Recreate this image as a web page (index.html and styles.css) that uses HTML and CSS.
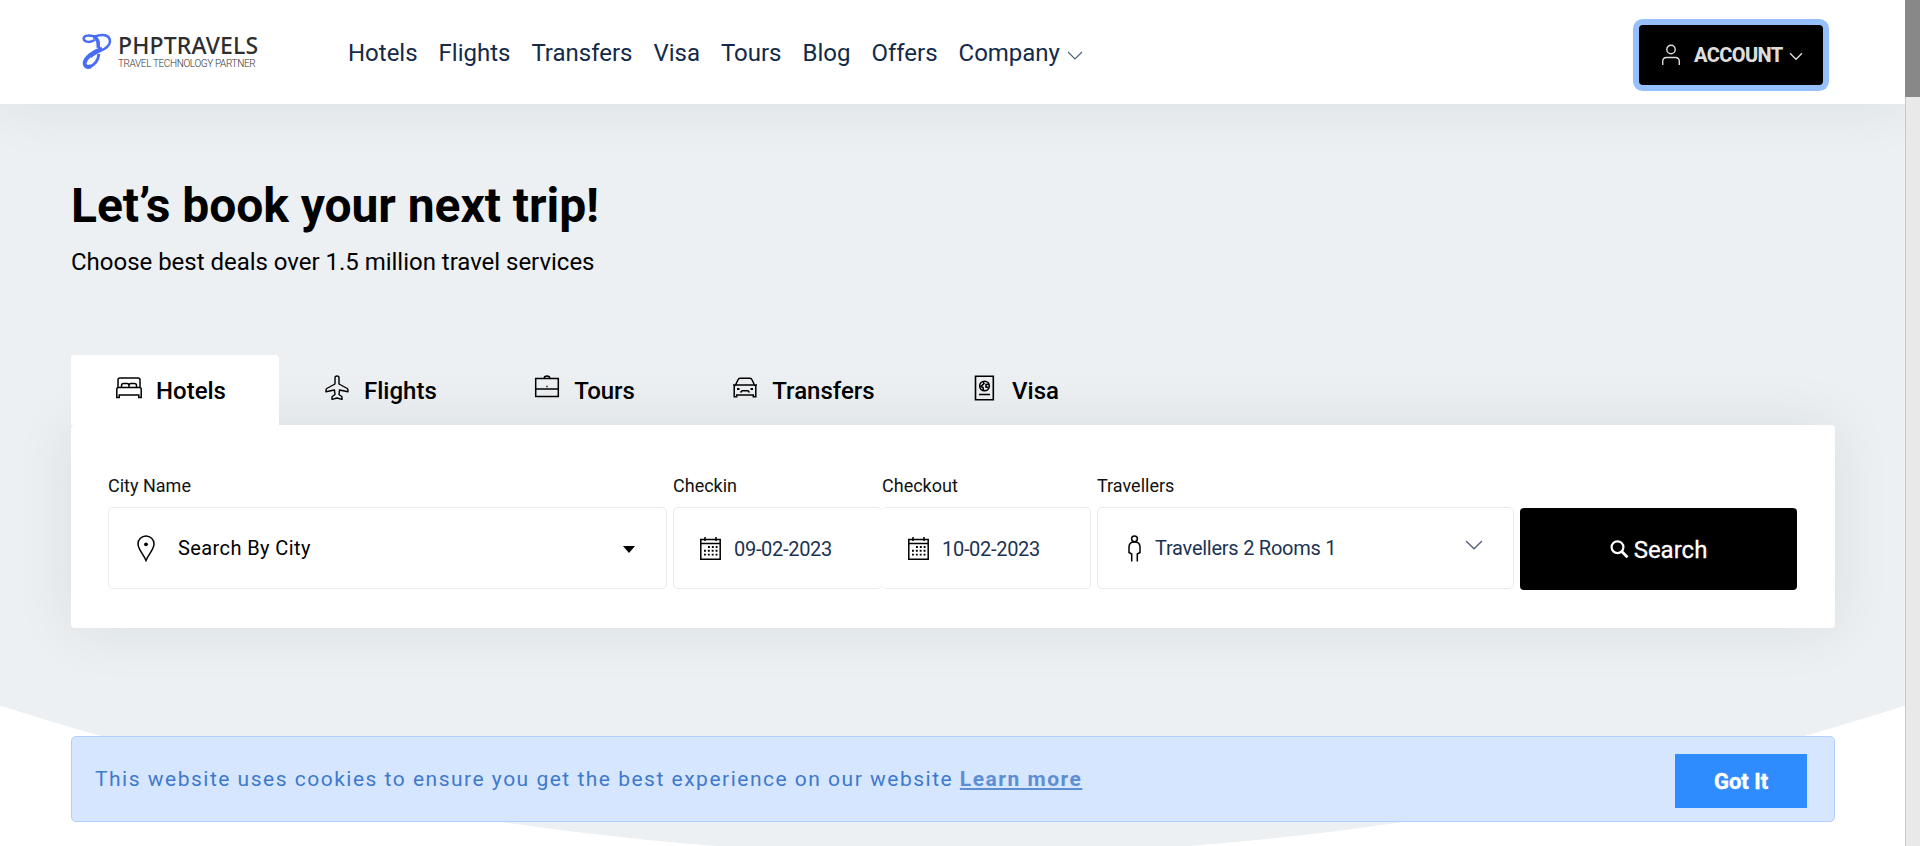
FILE: index.html
```
<!DOCTYPE html>
<html lang="en">
<head>
<meta charset="utf-8">
<title>PHPTRAVELS</title>
<link rel="stylesheet" href="styles.css">
</head>
<body>
<div class="page">
  <header class="header">
    <a class="logo">
      <svg class="logo-mark" width="31" height="37" viewBox="0 0 31 37" fill="none" stroke="#476cf5">
        <path d="M12.500 7C9 9.500 2 10 1.600 5.500C2 1.500 8 2.500 13 3.500C20 .8 27.800 1.200 28 8.500C27.500 16.500 15.500 17.500 8.500 24" stroke-width="2.500"/>
        <path d="M11.500 3.500C16 5.500 16.800 9.500 16.300 15" stroke-width="3.600"/>
        <path d="M20 15.500C12 18.500 2 25 2.800 31C3.500 34.800 7.500 34.500 9 32.500" stroke-width="4"/>
        <path d="M7 34C12.500 32 16.500 27 16.800 21" stroke-width="3"/>
      </svg>
      <span class="logo-text"><b class="logo-name">PHPTRAVELS</b><span class="logo-sub">TRAVEL TECHNOLOGY PARTNER</span></span>
    </a>
    <nav class="nav">
      <a>Hotels</a><a>Flights</a><a>Transfers</a><a>Visa</a><a>Tours</a><a>Blog</a><a>Offers</a><a>Company</a>
      <svg class="nav-chevron" width="16" height="10" viewBox="0 0 16 10" fill="none" stroke="#52617a" stroke-width="1.200"><path d="M1 1l7 7 7-7"/></svg>
    </nav>
    <button class="account">
      <svg width="20" height="22" viewBox="0 0 20 22" fill="none" stroke="#ddd" stroke-width="1.400"><circle cx="10" cy="5.500" r="4.200"/><path d="M1.700 21v-3.500q0-4 4-4h8.600q4 0 4 4V21"/></svg>
      <span class="account-text">ACCOUNT</span>
      <svg class="account-chevron" width="14" height="9" viewBox="0 0 14 9" fill="none" stroke="#ddd" stroke-width="1.400"><path d="M1 1.200l6 6 6-6"/></svg>
    </button>
  </header>

  <main class="hero">
    <h1 class="title">Let’s book your next trip!</h1>
    <p class="subtitle">Choose best deals over 1.5 million travel services</p>

    <div class="tabs">
      <a class="tab tab-active">
        <svg class="tab-icon" viewBox="0 0 28 28" fill="none" stroke="#000" stroke-width="1.500"><path d="M3 14V6q0-2 2-2h18q2 0 2 2v8M1.800 23.500V15q0-1.500 1.500-1.500h21.400q1.500 0 1.500 1.500v8.500h-2.400v-2.400H4.200v2.400zM6.500 13.300V11.500q0-2 2-2h3.500q2 0 2 2v1.800V11.500q0-2 2-2h3.500q2 0 2 2v1.800"/></svg>
        <span>Hotels</span></a>
      <a class="tab">
        <svg class="tab-icon" viewBox="0 0 28 28" fill="none" stroke="#000" stroke-width="1.400" stroke-linejoin="round"><path d="M12 10V4q0-2 2-2t2 2v6l8.300 4.500q.7.500.7 2v1.300L16.500 16l-.5 4.500 3 2.300v2.600L14 24l-5 1.400v-2.600l3-2.300-.5-4.500L3 17.800v-1.300q0-1.500.7-2z"/></svg>
        <span>Flights</span></a>
      <a class="tab">
        <svg class="tab-icon" viewBox="0 0 28 28" fill="none" stroke="#000" stroke-width="1.500"><path d="M2.700 4.500h22.600v18H2.700zM2.700 15h22.600M11 4.500q.3-2.500 3-2.500t3 2.500"/><path d="M14 11.800v1.400" stroke-width="1.300"/></svg>
        <span>Tours</span></a>
      <a class="tab">
        <svg class="tab-icon" viewBox="0 0 28 28" fill="none" stroke="#000" stroke-width="1.500"><path d="M2 11h24M4.500 11l2.600-5.500q.5-1.300 2-1.300h9.800q1.500 0 2 1.300L23.500 11M3.200 22.800V13q0-2 2-2h17.600q2 0 2 2v9.800h-2.500V21H5.700v1.800zM9.500 18.500l1.500-1.700h6l1.500 1.700"/><path d="M6 15h2.500M19.500 15H22" stroke-width="2"/></svg>
        <span>Transfers</span></a>
      <a class="tab">
        <svg class="tab-icon" viewBox="0 0 28 28" fill="none" stroke="#000" stroke-width="1.600"><path d="M4.500 2.300h17.800v23.400H4.500zM8 20.500H19"/><circle cx="13.500" cy="12" r="4.800"/><path d="M12 7.500l1 2-3 3 2 1 .5 3M18 10.200l-3 .3v2.500l2.500.5"/></svg>
        <span>Visa</span></a>
    </div>

    <form class="search">
      <div class="field field-city">
        <label>City Name</label>
        <div class="box">
          <svg class="pin" width="18" height="27" viewBox="0 0 18 27" fill="none" stroke="#000" stroke-width="1.500"><path d="M9 25.500C7 20 1 14.500 1 9A8 8 0 0 1 17 9C17 14.500 11 20 9 25.500z"/><circle cx="9" cy="9.300" r="1.900" fill="#000" stroke="none"/></svg>
          <span class="city">Search By City</span>
          <svg class="caret" width="12" height="7" viewBox="0 0 12 7"><path d="M0 0h12L6 7z"/></svg>
        </div>
      </div>
      <div class="dates">
        <div class="field field-in">
          <label>Checkin</label>
          <div class="box">
            <svg class="cal" width="21" height="23" viewBox="0 0 21 23" fill="none" stroke="#000" stroke-width="1.500"><path d="M.8 2.500h19.400v19.700H.8zM.8 6.500h19.400M5 0v4M16 0v4"/><path d="M8 10h9.500M4 13.800h13.500M4 17.600h13.500" stroke-width="1.900" stroke-dasharray="1.900 1.950"/></svg>
            <span class="date">09-02-2023</span>
          </div>
        </div>
        <div class="field field-out">
          <label>Checkout</label>
          <div class="box">
            <svg class="cal" width="21" height="23" viewBox="0 0 21 23" fill="none" stroke="#000" stroke-width="1.500"><path d="M.8 2.500h19.400v19.700H.8zM.8 6.500h19.400M5 0v4M16 0v4"/><path d="M8 10h9.500M4 13.800h13.500M4 17.600h13.500" stroke-width="1.900" stroke-dasharray="1.900 1.950"/></svg>
            <span class="date">10-02-2023</span>
          </div>
        </div>
      </div>
      <div class="field field-trav">
        <label>Travellers</label>
        <div class="box">
          <svg class="person" width="13" height="27" viewBox="0 0 13 27" fill="none" stroke="#000" stroke-width="1.500"><circle cx="6.500" cy="3.800" r="2.900"/><path d="M3.700 26.500V19L1 17.500V12q0-5 5.500-5t5.500 5v5.500L9.300 19v7.500"/></svg>
          <span class="trav">Travellers 2 Rooms 1</span>
          <svg class="trav-chevron" width="18" height="10" viewBox="0 0 18 10" fill="none" stroke="#52617a" stroke-width="1.300"><path d="M1 1l8 7.800L17 1"/></svg>
        </div>
      </div>
      <button class="submit" type="button">
        <svg width="19" height="19" viewBox="0 0 19 19" fill="none" stroke="#fff" stroke-width="2.200"><circle cx="7.500" cy="7.200" r="5.900"/><path d="M11.500 11.300l6 6" stroke-width="2.800"/></svg>
        <span class="submit-text">Search</span>
      </button>
    </form>
  </main>

  <aside class="cookies">
    <p class="cookies-text">This website uses cookies to ensure you get the best experience on our website <a class="learn">Learn more</a></p>
    <button class="got"><span>Got It</span></button>
  </aside>
  <div class="scrollbar"><div class="thumb"></div></div>
</div>
</body>
</html>
```
FILE: styles.css
```
* { box-sizing: border-box; }
body { margin: 0; font-family: Roboto, "Liberation Sans", sans-serif; background: #fff; color: #000; overflow: hidden; }
button { border: 0; font-family: inherit; padding: 0; }
svg { display: block; flex: none; }
h1, p { margin: 0; }
.page { position: relative; height: 846px; padding-right: 15px; overflow: hidden; }

.header { position: relative; z-index: 1; height: 104px; display: flex; align-items: center; padding: 0 82px 0 82px; background: #fff; box-shadow: 0 0 60px rgba(20, 32, 30, .085); }
.logo { display: flex; width: 266px; gap: 5px; padding-bottom: 1px; }
.logo-text { display: flex; flex-direction: column; }
.logo-name { font: 500 23px/25px "Noto Sans", sans-serif; color: #2e2e2e; letter-spacing: .15px; }
.logo-sub { font: 300 10px/12px Roboto, sans-serif; color: #333; white-space: nowrap; letter-spacing: -.37px; }
.nav { display: flex; align-items: center; gap: 21px; font-size: 24px; color: #132a4a; padding-top: 1px; letter-spacing: -.01px; }
.nav-chevron { margin: 6px 0 0 -14px; }
.account { margin: 6px 0 0 auto; width: 184px; height: 60px; border-radius: 4px; background: #000; color: #ddd; box-shadow: 0 0 0 6px #96bffd; display: flex; align-items: center; padding: 0 17px 0 22px; }
.account-text { font-size: 20px; font-weight: 800; letter-spacing: -.6px; margin: 0 6px 0 13px; }
.account-chevron { margin-top: 3px; }

.hero { height: 742px; padding: 72px 70px 0 71px; background: #ecf0f3; clip-path: circle(3110px at 50% -2359px); }
.title { font-size: 48px; line-height: 60px; font-weight: 700; letter-spacing: -.06px; }
.subtitle { font-size: 24px; line-height: 36px; margin-top: 8px; letter-spacing: -.02px; }
.tabs { position: relative; z-index: 1; display: flex; margin-top: 75px; }
.tab { height: 70px; display: flex; align-items: center; gap: 13px; padding: 0 52.400px 0 44px; font-size: 24px; font-weight: 500; }
.tab span { padding-top: 2px; }
.tab-active { width: 208px; background: #fff; border-radius: 4px 4px 0 0; }
.tab-icon { width: 28px; height: 28px; margin-bottom: 4px; }
.search { height: 203px; display: flex; align-items: flex-start; padding: 47px 38px 0 37px; gap: 6px; background: #fff; border-radius: 4px; box-shadow: 0 0 60px rgba(20, 32, 30, .085); }
.field { display: flex; flex-direction: column; }
.field label { font-size: 18px; line-height: 28px; margin-bottom: 7px; color: #111; }
.box { height: 82px; display: flex; align-items: center; border: 1px solid #ebebeb; border-radius: 5px; }
.field-city { width: 559px; }
.city { font-size: 20px; letter-spacing: .4px; margin-left: 23px; }
.pin { margin-left: 28px; }
.caret { margin: 2px 31px 0 auto; }
.dates { display: flex; width: 418px; }
.field-in, .field-out { flex: 1; }
.field-in .box { border-right: 0; }
.field-out .box { border-left: 0; }
.cal { margin-left: 26px; margin-right: 13px; }
.date { font-size: 20px; letter-spacing: -.3px; color: #1b3353; padding-top: 2px; }
.field-trav { width: 417px; }
.person { margin: 0 14px 0 30px; }
.trav { font-size: 20px; letter-spacing: -.25px; color: #1b3353; }
.trav-chevron { margin: 0 30px 7px auto; }
.submit { flex: 1; height: 82px; margin-top: 36px; background: #000; color: #fff; border-radius: 4px; display: flex; align-items: center; justify-content: center; gap: 5px; font-size: 24px; }
.submit-text { padding-top: 2px; -webkit-text-stroke: .3px #fff; }

.cookies { position: absolute; left: 71px; right: 85px; top: 736px; height: 86px; display: flex; align-items: center; justify-content: space-between; padding: 0 27px 0 23px; background: #d6e6ff; border: 1px solid #afcfff; border-radius: 5px; }
.cookies-text { font-size: 21px; letter-spacing: 1.5px; color: #3f79cb; }
.learn { font-weight: 700; color: #5e8ed2; text-decoration: underline; }
.got { width: 132px; height: 54px; margin-top: 4px; background: #2f8cff; color: #fff; font-size: 22px; font-weight: 700; -webkit-text-stroke: .4px #fff; }
.scrollbar { position: absolute; right: 0; top: 0; width: 15px; height: 846px; background: #e9e9e9; border-left: 1px solid #c8c8c8; z-index: 2; }
.thumb { margin-left: -1px; height: 97px; background: #888; }
```
